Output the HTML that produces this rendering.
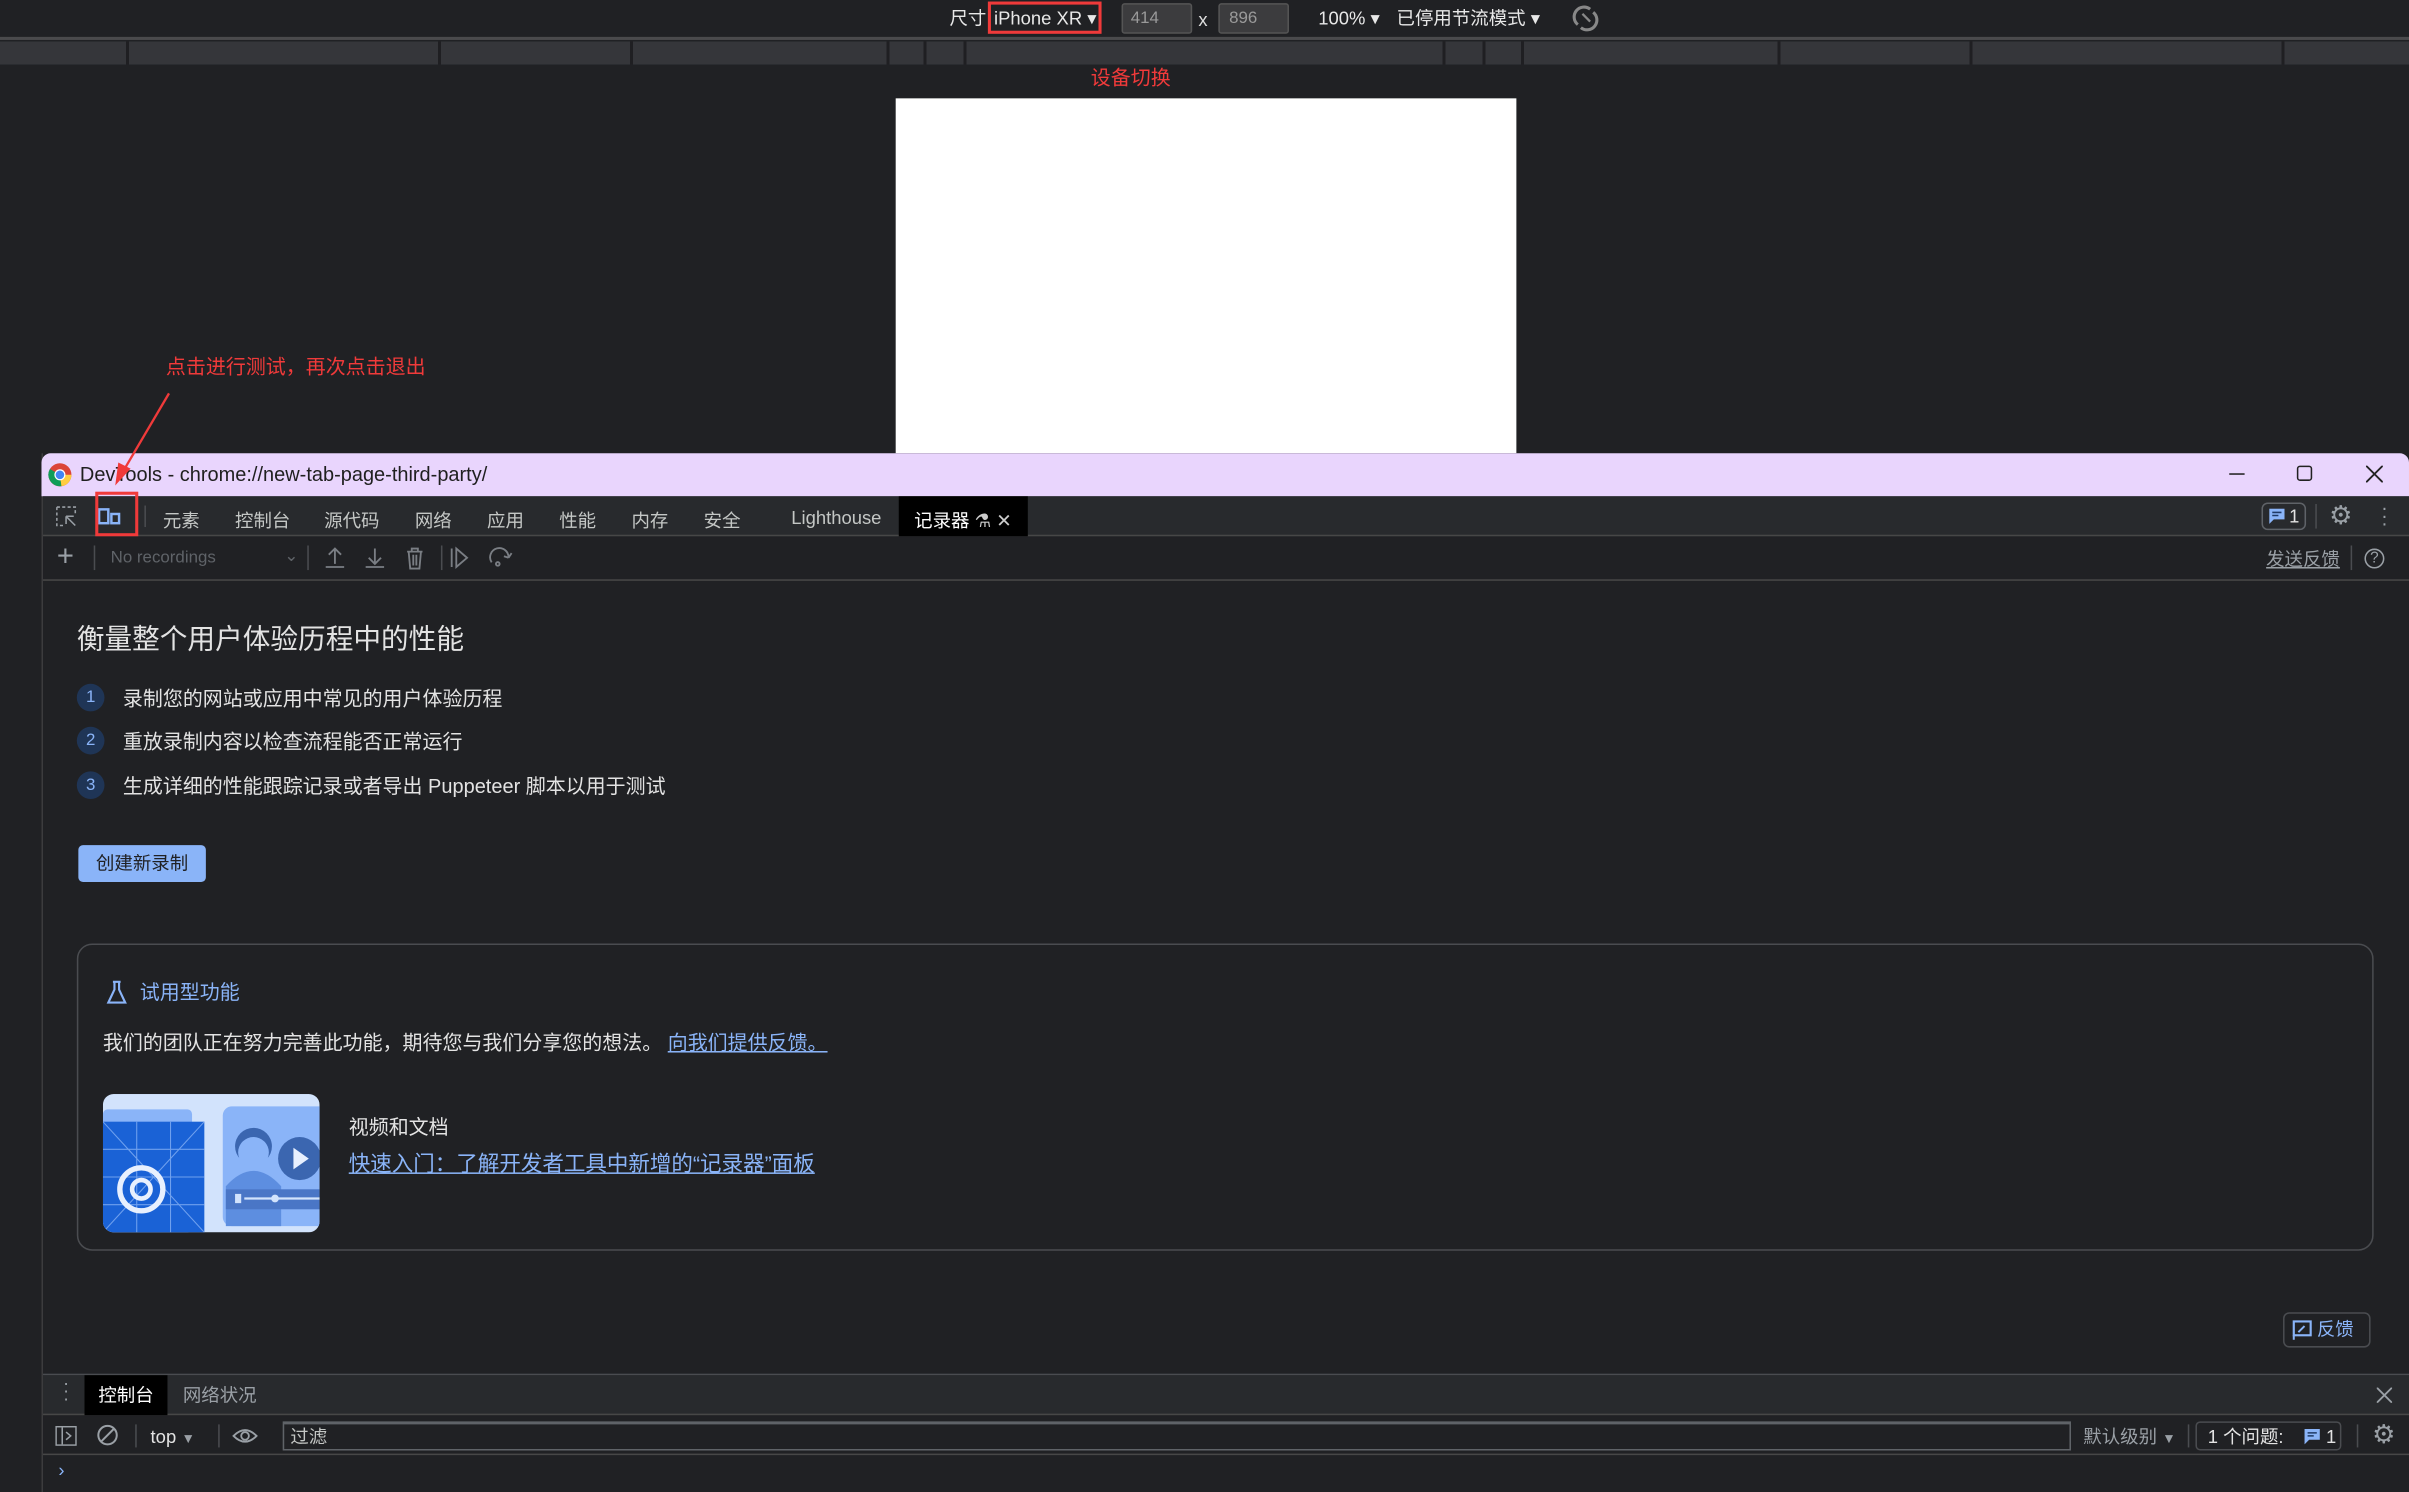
<!DOCTYPE html>
<html><head><meta charset="utf-8">
<style>
*{margin:0;padding:0;box-sizing:border-box}
html,body{width:2409px;height:1492px;overflow:hidden;background:#202124}
#s{position:absolute;left:0;top:0;width:1568px;height:971px;transform:scale(1.53635,1.53656);transform-origin:0 0;font-family:"Liberation Sans","Noto Sans CJK SC",sans-serif;color:#e3e3e3;font-size:12px}
.a{position:absolute}
.t{position:absolute;white-space:nowrap;line-height:1}
.vl{position:absolute;width:1px;background:#4a4c50}
.tab{position:absolute;top:330px;font-size:12px;color:#c4c7c5}
.gi{position:absolute;color:#9aa0a6}
</style></head><body><div id="s">
<!-- top toolbar -->
<div class="a" style="left:0;top:0;width:1568px;height:24px;background:#202124"></div>
<div class="a" style="left:0;top:24px;width:1568px;height:2px;background:#4a4a4c"></div>
<div class="t" style="left:618px;top:6px;font-size:12px;color:#e8e8e8">尺寸:</div>
<div class="a" style="left:643px;top:1px;width:74px;height:21px;border:2px solid #f03a3a"></div>
<div class="t" style="left:647px;top:6px;font-size:12px;color:#e8e8e8">iPhone XR ▾</div>
<div class="a" style="left:730px;top:2px;width:46px;height:20px;background:#3c3c3e;border:1px solid #555;border-radius:2px"></div>
<div class="t" style="left:736px;top:7px;font-size:11px;color:#9a9a9a">414</div>
<div class="t" style="left:780px;top:7px;font-size:12px;color:#ddd">x</div>
<div class="a" style="left:793px;top:2px;width:46px;height:20px;background:#3c3c3e;border:1px solid #555;border-radius:2px"></div>
<div class="t" style="left:800px;top:7px;font-size:11px;color:#9a9a9a">896</div>
<div class="t" style="left:858px;top:6px;font-size:12px;color:#e8e8e8">100% ▾</div>
<div class="t" style="left:909px;top:6px;font-size:12px;color:#e8e8e8">已停用节流模式 ▾</div>
<svg class="a" style="left:1023px;top:3px" width="18" height="18" viewBox="0 0 18 18"><path d="M4 13 A6 6 0 0 1 12 3 M14 5 A6 6 0 0 1 6 15" stroke="#888" stroke-width="2" fill="none"/><path d="M7 6l5 5" stroke="#888" stroke-width="1.5"/></svg>
<!-- ruler -->
<div class="a" style="left:0;top:27px;width:1568px;height:15px;background:#35363a"></div>
<div class="a" style="left:0;top:27px;width:1568px;height:15px;background:
linear-gradient(90deg,transparent 82px,#1f1f22 82px,#1f1f22 84px,transparent 84px,transparent 285px,#1f1f22 285px,#1f1f22 287px,transparent 287px,transparent 410px,#1f1f22 410px,#1f1f22 412px,transparent 412px,transparent 577px,#1f1f22 577px,#1f1f22 579px,transparent 579px,transparent 601px,#1f1f22 601px,#1f1f22 603px,transparent 603px,transparent 627px,#1f1f22 627px,#1f1f22 629px,transparent 629px,transparent 939px,#1f1f22 939px,#1f1f22 941px,transparent 941px,transparent 965px,#1f1f22 965px,#1f1f22 967px,transparent 967px,transparent 990px,#1f1f22 990px,#1f1f22 992px,transparent 992px,transparent 1157px,#1f1f22 1157px,#1f1f22 1159px,transparent 1159px,transparent 1282px,#1f1f22 1282px,#1f1f22 1284px,transparent 1284px,transparent 1485px,#1f1f22 1485px,#1f1f22 1487px,transparent 1487px)"></div>
<div class="t" style="left:710px;top:44px;font-size:13px;color:#f03a3a">设备切换</div>
<div class="a" style="left:583px;top:64px;width:404px;height:231px;background:#fff"></div>
<div class="t" style="left:108px;top:231px;font-size:13px;color:#f03a3a;font-family:'Noto Sans CJK SC',sans-serif">点击进行测试，再次点击退出</div>
<!-- window -->
<div class="a" style="left:27px;top:295px;width:1541px;height:676px;background:#202124;border-left:1px solid #3c3c3e"></div>
<div class="a" style="left:27px;top:295px;width:1541px;height:28px;background:#e9d5fd;border-radius:6px 6px 0 0"></div>
<svg class="a" style="left:31px;top:301px" width="16" height="16" viewBox="0 0 16 16"><circle cx="8" cy="8" r="7.5" fill="#db4437"/><path d="M8 8 L1.5 11.75 A7.5 7.5 0 0 0 9 15.4Z" fill="#0f9d58"/><path d="M8 8 L9 15.4 A7.5 7.5 0 0 0 15.5 8Z" fill="#ffcd40"/><path d="M8 8L1.5 11.75A7.5 7.5 0 0 1 1.5 4.25Z" fill="#0f9d58"/><circle cx="8" cy="8" r="3.6" fill="#fff"/><circle cx="8" cy="8" r="2.8" fill="#4285f4"/></svg>
<div class="t" style="left:52px;top:302px;font-size:13px;color:#1f1f1f">DevTools - chrome://new-tab-page-third-party/</div>
<div class="a" style="left:1451px;top:308px;width:10px;height:1px;background:#222"></div>
<div class="a" style="left:1495px;top:303px;width:10px;height:10px;border:1px solid #222;border-radius:2px"></div>
<svg class="a" style="left:1540px;top:303px" width="11" height="11"><path d="M0 0L11 11M11 0L0 11" stroke="#222" stroke-width="1.2"/></svg>
<!-- tab bar -->
<div class="a" style="left:28px;top:323px;width:1540px;height:26px;background:#282a2d;border-bottom:1px solid #474747"></div>
<svg class="a" style="left:36px;top:329px" width="14" height="14"><path d="M1 1h12v5M1 1v12h5" stroke="#9aa0a6" stroke-dasharray="2 1.5" fill="none"/><path d="M7 7l6 6M7 7v5M7 7h5" stroke="#9aa0a6" fill="none"/></svg>
<svg class="a" style="left:63px;top:329px" width="16" height="14"><rect x="1.5" y="2.5" width="6" height="9" fill="none" stroke="#8ab4f8" stroke-width="1.6"/><rect x="9.5" y="5.5" width="5" height="6" fill="none" stroke="#8ab4f8" stroke-width="1.6"/></svg>
<div class="a" style="left:62px;top:320px;width:28px;height:29px;border:2px solid #f03a3a"></div>
<div class="vl" style="left:94px;top:329px;height:14px"></div>
<div class="tab" style="left:106px">元素</div>
<div class="tab" style="left:153px">控制台</div>
<div class="tab" style="left:211px">源代码</div>
<div class="tab" style="left:270px">网络</div>
<div class="tab" style="left:317px">应用</div>
<div class="tab" style="left:364px">性能</div>
<div class="tab" style="left:411px">内存</div>
<div class="tab" style="left:458px">安全</div>
<div class="tab" style="left:515px">Lighthouse</div>
<div class="a" style="left:585px;top:323px;width:84px;height:26px;background:#000"></div>
<div class="tab" style="left:595px;color:#fff">记录器 <span style="color:#ccc">⚗ ✕</span></div>
<svg class="a" style="left:650px;top:331px" width="1" height="1"></svg>
<div class="a" style="left:1472px;top:327px;width:29px;height:18px;border:1px solid #5f6368;border-radius:4px"></div>
<svg class="a" style="left:1477px;top:331px" width="10" height="10"><path d="M0 0h10v7H3l-3 3z" fill="#8ab4f8"/><path d="M2 2.5h6M2 4.5h4" stroke="#1f3a66"/></svg>
<div class="t" style="left:1490px;top:330px;font-size:12px;color:#e3e3e3">1</div>
<div class="vl" style="left:1507px;top:328px;height:16px"></div>
<div class="gi" style="left:1516px;top:326px;font-size:17px">⚙</div>
<div class="gi" style="left:1549px;top:328px;font-size:13px;line-height:5px;width:6px;text-align:center">·<br>·<br>·</div>
<!-- recorder toolbar -->
<div class="a" style="left:28px;top:350px;width:1540px;height:28px;background:#202124;border-bottom:1px solid #474747"></div>
<div class="gi" style="left:37px;top:352px;font-size:19px;font-weight:300">+</div>
<div class="vl" style="left:61px;top:355px;height:16px"></div>
<div class="t" style="left:72px;top:358px;font-size:11px;color:#5f6368">No recordings</div>
<div class="t" style="left:185px;top:357px;font-size:11px;color:#5f6368">⌄</div>
<div class="vl" style="left:200px;top:355px;height:16px"></div>
<svg class="a" style="left:210px;top:355px" width="130" height="16"><g stroke="#7a7e84" fill="none" stroke-width="1.2"><path d="M8 2v10M4 6l4-4 4 4M2 14h12"/><path d="M34 2v10M30 8l4 4 4-4M28 14h12"/><path d="M55 4h10M58 4V2h4v2M56 4l1 11h6l1-11M59 6v7M61 6v7"/><path d="M84 2v12"/><path d="M87 2v12l7-6z"/><path d="M110 11a6 6 0 1 1 11-3M121 8l2-3M121 8l-3-1"/><circle cx="114" cy="12" r="1.2"/></g></svg>
<div class="vl" style="left:287px;top:355px;height:16px"></div>
<div class="t" style="left:1475px;top:358px;font-size:12px;color:#9aa0a6;text-decoration:underline">发送反馈</div>
<div class="vl" style="left:1530px;top:355px;height:16px"></div>
<div class="a" style="left:1539px;top:357px;width:13px;height:13px;border:1.2px solid #9aa0a6;border-radius:50%;color:#9aa0a6;font-size:10px;text-align:center;line-height:11px">?</div>
<!-- content -->
<div class="t" style="left:50px;top:407px;font-size:18px;color:#e3e3e3">衡量整个用户体验历程中的性能</div>
<div class="a" style="left:50px;top:445px;width:18px;height:18px;border-radius:50%;background:#1f3556;color:#8ab4f8;font-size:11px;text-align:center;line-height:18px">1</div>
<div class="t" style="left:80px;top:448px;font-size:13px">录制您的网站或应用中常见的用户体验历程</div>
<div class="a" style="left:50px;top:473px;width:18px;height:18px;border-radius:50%;background:#1f3556;color:#8ab4f8;font-size:11px;text-align:center;line-height:18px">2</div>
<div class="t" style="left:80px;top:476px;font-size:13px">重放录制内容以检查流程能否正常运行</div>
<div class="a" style="left:50px;top:502px;width:18px;height:18px;border-radius:50%;background:#1f3556;color:#8ab4f8;font-size:11px;text-align:center;line-height:18px">3</div>
<div class="t" style="left:80px;top:505px;font-size:13px">生成详细的性能跟踪记录或者导出 Puppeteer 脚本以用于测试</div>
<div class="a" style="left:51px;top:550px;width:83px;height:24px;background:#8ab4f8;border-radius:3px;color:#202124;font-size:12px;text-align:center;line-height:24px">创建新录制</div>
<div class="a" style="left:50px;top:614px;width:1495px;height:200px;border:1px solid #4a4c50;border-radius:10px"></div>
<svg class="a" style="left:69px;top:638px" width="14" height="16"><path d="M4.5 1h5M5.5 1v5L1.5 14.5h11L8.5 6V1" stroke="#8ab4f8" stroke-width="1.4" fill="none"/></svg>
<div class="t" style="left:91px;top:639px;font-size:13px;color:#8ab4f8">试用型功能</div>
<div class="t" style="left:67px;top:672px;font-size:13px">我们的团队正在努力完善此功能，期待您与我们分享您的想法。 <span style="color:#8ab4f8;text-decoration:underline">向我们提供反馈。</span></div>
<svg class="a" style="left:67px;top:712px" width="141" height="90" viewBox="0 0 141 90"><defs><clipPath id="c"><rect width="141" height="90" rx="7"/></clipPath></defs><g clip-path="url(#c)"><rect width="141" height="90" fill="#d2e3fc"/><rect x="0" y="10" width="58" height="80" fill="#8ab4f8" rx="3"/><rect x="0" y="18" width="66" height="72" fill="#1a62d6"/><g stroke="#6fa0ee" stroke-width="0.7"><path d="M0 36h66M0 54h66M0 72h66M22 18v72M44 18v72M0 18l66 72M66 18L0 90"/></g><circle cx="25" cy="62" r="14" fill="none" stroke="#e8f0fe" stroke-width="3.5"/><circle cx="25" cy="62" r="6" fill="none" stroke="#e8f0fe" stroke-width="3"/><rect x="78" y="8" width="70" height="78" rx="6" fill="#8ab4f8"/><circle cx="98" cy="34" r="12" fill="#3b66b0"/><path d="M80 60q18-20 36 0v26H80z" fill="#5d8ee0"/><circle cx="98" cy="38" r="10" fill="#8ab4f8"/><circle cx="128" cy="42" r="14" fill="#3b66b0"/><path d="M124 35v14l10-7z" fill="#e8f0fe"/><rect x="80" y="62" width="61" height="13" fill="#4a76c6"/><path d="M92 68h50" stroke="#d2e3fc" stroke-width="1.5"/><circle cx="112" cy="68" r="2.5" fill="#d2e3fc"/><rect x="86" y="65" width="4" height="6" fill="#d2e3fc"/></g></svg>
<div class="t" style="left:227px;top:727px;font-size:13px">视频和文档</div>
<div class="t" style="left:227px;top:750px;font-size:14px;color:#8ab4f8;text-decoration:underline">快速入门：了解开发者工具中新增的“记录器”面板</div>
<div class="a" style="left:1486px;top:854px;width:57px;height:23px;border:1px solid #4a4c50;border-radius:4px"></div>
<svg class="a" style="left:1492px;top:859px" width="13" height="13"><rect x="1" y="1" width="11" height="9" fill="none" stroke="#8ab4f8" stroke-width="1.4"/><path d="M1 10v3M4 8l4-4" stroke="#8ab4f8" stroke-width="1.3"/></svg>
<div class="t" style="left:1508px;top:859px;font-size:12px;color:#8ab4f8">反馈</div>
<!-- drawer -->
<div class="a" style="left:28px;top:894px;width:1540px;height:1px;background:#4a4c50"></div>
<div class="a" style="left:28px;top:895px;width:1540px;height:26px;background:#282a2d;border-bottom:1px solid #474747"></div>
<div class="gi" style="left:40px;top:898px;font-size:12px;line-height:5px;width:6px;text-align:center">·<br>·<br>·</div>
<div class="a" style="left:55px;top:895px;width:54px;height:26px;background:#000"></div>
<div class="t" style="left:64px;top:902px;font-size:12px;color:#fff">控制台</div>
<div class="t" style="left:119px;top:902px;font-size:12px;color:#9aa0a6">网络状况</div>
<svg class="a" style="left:1547px;top:903px" width="10" height="10"><path d="M0 0L10 10M10 0L0 10" stroke="#9aa0a6" stroke-width="1.2"/></svg>
<div class="a" style="left:28px;top:922px;width:1540px;height:25px;background:#202124;border-bottom:1px solid #474747"></div>
<svg class="a" style="left:36px;top:928px" width="14" height="13"><rect x="0.5" y="0.5" width="13" height="12" fill="none" stroke="#9aa0a6"/><path d="M4.5 1v11M7 4l3 2.5L7 9" stroke="#9aa0a6" fill="none"/></svg>
<svg class="a" style="left:63px;top:927px" width="14" height="14"><circle cx="7" cy="7" r="6" fill="none" stroke="#9aa0a6" stroke-width="1.3"/><path d="M3 11L11 3" stroke="#9aa0a6" stroke-width="1.3"/></svg>
<div class="vl" style="left:88px;top:927px;height:15px"></div>
<div class="t" style="left:98px;top:929px;font-size:12px;color:#e3e3e3">top <span style="font-size:9px;color:#9aa0a6">▼</span></div>
<div class="vl" style="left:142px;top:927px;height:15px"></div>
<svg class="a" style="left:151px;top:929px" width="17" height="11"><path d="M1 5.5Q8.5-2 16 5.5Q8.5 13 1 5.5z" fill="none" stroke="#9aa0a6" stroke-width="1.2"/><circle cx="8.5" cy="5.5" r="2.5" fill="none" stroke="#9aa0a6" stroke-width="1.2"/></svg>
<div class="a" style="left:184px;top:925px;width:1164px;height:19px;background:#202124;border:1px solid #5f6368;border-top:2px solid #5f6368"></div>
<div class="t" style="left:189px;top:929px;font-size:12px;color:#c4c7c5">过滤</div>
<div class="t" style="left:1356px;top:929px;font-size:12px;color:#9aa0a6">默认级别 <span style="font-size:9px">▼</span></div>
<div class="vl" style="left:1424px;top:927px;height:15px"></div>
<div class="a" style="left:1429px;top:925px;width:95px;height:19px;border:1px solid #4a4c50;border-radius:3px"></div>
<div class="t" style="left:1437px;top:929px;font-size:12px;color:#e3e3e3">1 个问题:</div>
<svg class="a" style="left:1500px;top:930px" width="10" height="10"><path d="M0 0h10v7H3l-3 3z" fill="#8ab4f8"/><path d="M2 2.5h6M2 4.5h4" stroke="#1f3a66"/></svg>
<div class="t" style="left:1514px;top:929px;font-size:12px;color:#e3e3e3">1</div>
<div class="vl" style="left:1534px;top:927px;height:15px"></div>
<div class="gi" style="left:1544px;top:924px;font-size:17px">⚙</div>
<div class="t" style="left:38px;top:951px;font-size:12px;color:#8ab4f8">›</div>
<!-- arrow -->
<svg class="a" style="left:0;top:0" width="1568" height="971"><path d="M110 256L80 307" stroke="#f03a3a" stroke-width="1.5"/><path d="M75 316L77 301L85 305Z" fill="#f03a3a"/></svg>
</div></body></html>
